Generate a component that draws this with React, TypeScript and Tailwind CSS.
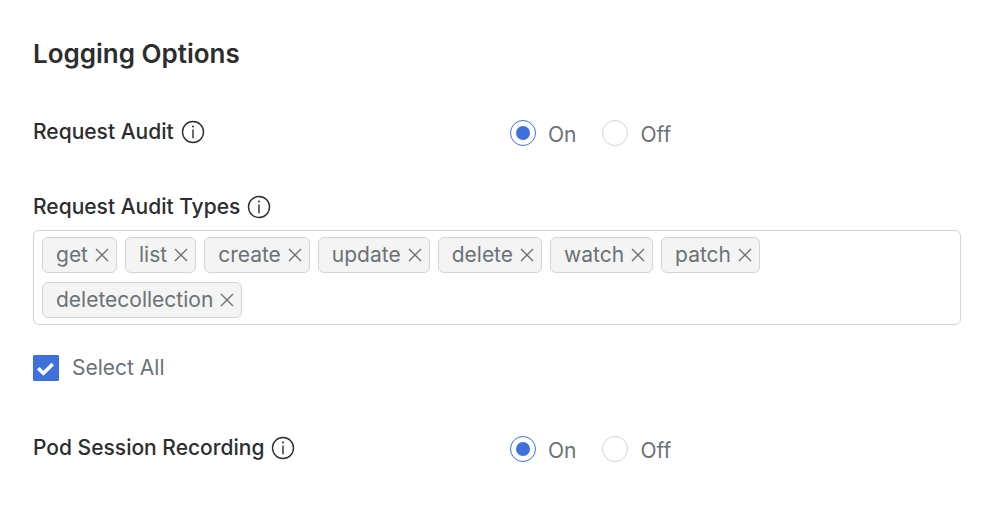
import { useState } from 'react'

const ALL_TYPES = ['get', 'list', 'create', 'update', 'delete', 'watch', 'patch', 'deletecollection']

function InfoIcon() {
  return (
    <svg className="size-6 shrink-0" viewBox="0 0 24 24" fill="none" aria-hidden="true">
      <circle cx="12" cy="12" r="10.5" stroke="currentColor" strokeWidth="1.4" />
      <path d="M12 9.6v8.6" stroke="currentColor" strokeWidth="1.4" />
      <circle cx="12" cy="6.6" r="1" fill="currentColor" />
    </svg>
  )
}

function CloseIcon() {
  return (
    <svg className="size-3.5" viewBox="0 0 14 14" fill="none" aria-hidden="true">
      <path d="M1 1l12 12M13 1L1 13" stroke="currentColor" strokeWidth="1.4" />
    </svg>
  )
}

function Radio({ name, label, checked, onSelect }: { name: string; label: string; checked: boolean; onSelect: () => void }) {
  return (
    <label className="flex items-center gap-3 text-[#6b7276]">
      <input
        type="radio"
        name={name}
        checked={checked}
        onChange={onSelect}
        className="size-[26px] appearance-none rounded-full border border-[#d3d4d8] bg-white bg-clip-content p-[5px] checked:border-[#3f71dc] checked:bg-[#3f71dc]"
      />
      <span className="pt-1">{label}</span>
    </label>
  )
}

function ToggleRow({ name, title }: { name: string; title: string }) {
  const [on, setOn] = useState(true)
  return (
    <div role="radiogroup" aria-label={title} className="grid grid-cols-2 items-center gap-x-[26px]">
      <div className="flex items-center gap-[7px] pb-0.5 font-medium">
        {title}
        <InfoIcon />
      </div>
      <div className="flex items-center gap-[26px]">
        <Radio name={name} label="On" checked={on} onSelect={() => setOn(true)} />
        <Radio name={name} label="Off" checked={!on} onSelect={() => setOn(false)} />
      </div>
    </div>
  )
}

export default function App() {
  const [types, setTypes] = useState(ALL_TYPES)
  const allSelected = types.length === ALL_TYPES.length

  return (
    <main className="bg-white pt-9 pr-[41px] pb-10 pl-[33px] font-['Inter',sans-serif] text-[21px] leading-8 text-[#2b2d2e]">
      <h1 className="text-[26px] leading-9 font-semibold">Logging Options</h1>

      <div className="mt-[43px]">
        <ToggleRow name="request-audit" title="Request Audit" />
      </div>

      <section className="mt-10">
        <h2 className="flex items-center gap-[7px] font-medium">
          Request Audit Types
          <InfoIcon />
        </h2>
        <ul className="mt-[7px] flex flex-wrap gap-x-2 gap-y-[9px] rounded-md border border-[#d3d4d8] px-2 py-1.5">
          {types.map((type) => (
            <li
              key={type}
              className="flex h-9 items-center gap-[7px] rounded-md border border-[#d3d4d8] bg-[#f4f4f4] pr-[7px] pl-[13px] text-[#6b7276]"
            >
              <span>{type}</span>
              <button type="button" aria-label={`Remove ${type}`} onClick={() => setTypes(types.filter((t) => t !== type))}>
                <CloseIcon />
              </button>
            </li>
          ))}
        </ul>
        <label className="mt-[27px] flex w-fit items-center gap-[13px] text-[#6b7276]">
          <span className="grid">
            <input
              type="checkbox"
              checked={allSelected}
              onChange={() => setTypes(allSelected ? [] : ALL_TYPES)}
              className="peer col-start-1 row-start-1 size-[26px] appearance-none rounded-[1px] border border-[#d3d4d8] checked:border-[#3f71dc] checked:bg-[#3f71dc]"
            />
            <svg
              className="pointer-events-none invisible col-start-1 row-start-1 size-[26px] text-white peer-checked:visible"
              viewBox="0 0 26 26"
              fill="none"
              aria-hidden="true"
            >
              <path d="M5.2 13.3l5.2 5L19.8 9" stroke="currentColor" strokeWidth="3.6" />
            </svg>
          </span>
          Select All
        </label>
      </section>

      <div className="mt-[47px]">
        <ToggleRow name="pod-session-recording" title="Pod Session Recording" />
      </div>
    </main>
  )
}
